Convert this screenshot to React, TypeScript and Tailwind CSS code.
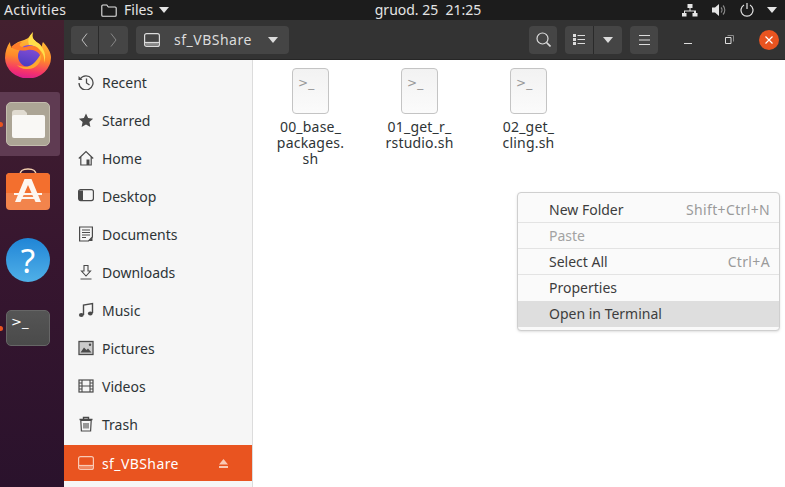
import React from 'react';

const font = "font-['Noto_Sans','Open_Sans',sans-serif]";

const Caret = ({ className = '' }: { className?: string }) => (
  <svg width="10" height="6" viewBox="0 0 10 6" className={className}>
    <path d="M0 0h10L5 6z" fill="currentColor" />
  </svg>
);

const DriveIcon = ({ color = '#dcdcdc' }: { color?: string }) => (
  <svg width="16" height="14" viewBox="0 0 16 14" fill="none" stroke={color} strokeWidth="1.2">
    <rect x="0.6" y="0.6" width="14.8" height="12.8" rx="2" />
    <path d="M1 9.500h14" />
    <path d="M1.500 10h13v2.500h-13z" fill={color} stroke="none" opacity="0.45" />
  </svg>
);

const sideIcons: Record<string, React.ReactNode> = {
  Recent: (
    <>
      <path d="M2.200 5A7 7 0 1 1 1 9" fill="none" stroke="#4a4a4a" strokeWidth="1.3" />
      <path d="M0.500 2v4h4z" fill="#4a4a4a" />
      <path d="M8.500 4.500V9l3 2" fill="none" stroke="#4a4a4a" strokeWidth="1.3" />
    </>
  ),
  Starred: <path d="M8 1.500l2.100 4.600 5 .6-3.700 3.400 1 5L8 12.600l-4.400 2.500 1-5L.9 6.700l5-.6z" fill="#4a4a4a" />,
  Home: (
    <>
      <path d="M0.800 8.500L8 1.500l7.200 7M2.800 7v8h10.400V7" fill="none" stroke="#4a4a4a" strokeWidth="1.2" />
      <path d="M8.500 9.500h3V15h-3z" fill="#4a4a4a" />
    </>
  ),
  Desktop: (
    <>
      <rect x="0.6" y="1.600" width="14.8" height="11" rx="2" fill="none" stroke="#4a4a4a" strokeWidth="1.2" />
      <path d="M1 2.500h4V12H1z" fill="#4a4a4a" />
    </>
  ),
  Documents: (
    <>
      <path d="M1.600 1h12.800v10L10.500 15H1.600z" fill="none" stroke="#4a4a4a" strokeWidth="1.2" />
      <path d="M4 4h8M4 6.500h8M4 9h8M4 11.500h4" stroke="#4a4a4a" strokeWidth="1" />
      <path d="M14.500 11v4H10.500z" fill="#4a4a4a" />
    </>
  ),
  Downloads: <path d="M6 1.500h4v5.500h2.500L8 12 3.500 7H6zM2.500 15h11" fill="none" stroke="#4a4a4a" strokeWidth="1.1" />,
  Music: (
    <>
      <path d="M5.500 13V3l9-1.500V11" fill="none" stroke="#4a4a4a" strokeWidth="1.4" />
      <ellipse cx="3.300" cy="13" rx="2.400" ry="1.900" fill="#4a4a4a" />
      <ellipse cx="12.300" cy="11.500" rx="2.400" ry="1.900" fill="#4a4a4a" />
    </>
  ),
  Pictures: (
    <>
      <rect x="1" y="1.500" width="14" height="13" fill="none" stroke="#4a4a4a" strokeWidth="1.3" />
      <path d="M1.500 2h13v12h-13z" fill="#4a4a4a" opacity="0.25" />
      <path d="M2.500 12.500l3.500-5 2.500 2.500 1.500-1.500 3.500 4z" fill="#4a4a4a" />
      <circle cx="12" cy="4.800" r="1.200" fill="#4a4a4a" />
    </>
  ),
  Videos: (
    <>
      <rect x="1" y="2" width="14" height="12" fill="none" stroke="#4a4a4a" strokeWidth="1.2" />
      <path d="M4 2v12M12 2v12M4 8h8M1 5h3M1 8h3M1 11h3M12 5h3M12 8h3M12 11h3" stroke="#4a4a4a" strokeWidth="1.1" />
    </>
  ),
  Trash: (
    <>
      <path d="M1.500 3.500h13M5.500 3.500V1.500h5v2" fill="none" stroke="#4a4a4a" strokeWidth="1.4" />
      <path d="M2.800 4.500h10.400l-.6 10.500H3.400z" fill="none" stroke="#4a4a4a" strokeWidth="1.2" />
      <path d="M6 7v5.500M8 7v5.500M10 7v5.500" stroke="#4a4a4a" strokeWidth="1.1" />
    </>
  ),
};

const places = ['Recent', 'Starred', 'Home', 'Desktop', 'Documents', 'Downloads', 'Music', 'Pictures', 'Videos', 'Trash'];

const files = [
  { lines: ['00_base_', 'packages.', 'sh'] },
  { lines: ['01_get_r_', 'rstudio.sh'] },
  { lines: ['02_get_', 'cling.sh'] },
];

const menu = [
  { label: 'New Folder', hint: 'Shift+Ctrl+N', line: true },
  { label: 'Paste', disabled: true, line: true },
  { label: 'Select All', hint: 'Ctrl+A', line: true },
  { label: 'Properties' },
  { label: 'Open in Terminal', active: true },
];

const FileIcon = () => (
  <div className="w-[37px] h-[46px] rounded-[4px] border border-[#c4c4c4] bg-gradient-to-b from-[#f2f2f2] to-[#fbfbfb] pl-[5px] text-[12px] leading-[28px] text-[#999] font-['DejaVu_Sans',sans-serif]">
    &gt;_
  </div>
);

const HeaderButton = ({ children, className = '' }: { children: React.ReactNode; className?: string }) => (
  <div className={`h-[28px] rounded-[4px] bg-[#454545] flex items-center justify-center ${className}`}>{children}</div>
);

const Dock = () => (
  <div className="w-[64px] shrink-0 h-full flex flex-col bg-gradient-to-b from-[#43202f] via-[#37162f] to-[#2a122c]">
    <div className="h-[72px] pt-[12px] pl-[5px]">
      <svg width="46" height="46" viewBox="0 0 46 46">
        <defs>
          <linearGradient id="fx" x1="0.6" y1="0" x2="0.45" y2="1">
            <stop offset="0" stopColor="#ffcf3a" />
            <stop offset="0.55" stopColor="#ff8a2a" />
            <stop offset="0.85" stopColor="#f5336b" />
            <stop offset="1" stopColor="#d91f8c" />
          </linearGradient>
          <linearGradient id="fxball" x1="0.6" y1="0" x2="0.4" y2="1">
            <stop offset="0" stopColor="#8a4fd8" />
            <stop offset="1" stopColor="#4a3cc0" />
          </linearGradient>
        </defs>
        <path d="M28 0c-2 6 1 8 5 11 2 1 3 2 4 4 0-2 0-3 1-5 5 5 8 11 8 15a23 21 0 0 1-46 1C0 20 2 14 5 10c0 3 1 5 2 6 2-4 5-6 9-7 4-1 9-3 12-9z" fill="url(#fx)" />
        <path d="M28 0c-2 6 1 8 5 11 6 5 9 12 6 20 2-10-6-17-15-18-2-6 1-10 4-13z" fill="#ffdf4a" />
        <circle cx="24" cy="24" r="11" fill="url(#fxball)" />
        <path d="M6 15c4-4 9-5 11-5-2 1-3 3-2 4 3 2 6 1 9 0 8-1 13 4 12 11-2-5-7-8-13-7-5 1-12 1-17-3z" fill="#ff7c2a" />
        <path d="M36 22c1 9-6 16-15 15-4 0-7-2-9-4 7 3 14 2 18-3 3-3 4-6 6-8z" fill="#ffa92e" />
      </svg>
    </div>
    <div className="w-[60px] h-[64px] rounded-r-[3px] bg-[#5f3b52] pt-[10px] pl-[6px] relative">
      <div className="absolute left-0 top-[30px] w-[3px] h-[5px] rounded-r-full bg-[#e95420]" />
      <div className="w-[44px] h-[44px] rounded-[5px] bg-[#aca595] border border-[#c4bdae] pt-[7px] pl-[5px]">
        <svg width="33" height="28" viewBox="0 0 33 28">
          <path d="M0 3a3 3 0 0 1 3-3h9l3 3v4H0z" fill="#e0dbd0" />
          <path d="M0 7a2 2 0 0 1 2-2h29a2 2 0 0 1 2 2v19a2 2 0 0 1-2 2H2a2 2 0 0 1-2-2z" fill="#f9f8f5" />
        </svg>
      </div>
    </div>
    <div className="pl-[6px] pt-[12px] h-[82px]">
      <svg width="44" height="44" viewBox="0 0 44 44">
        <path d="M14 7c0-5 3-6 8-6s8 1 8 6" fill="none" stroke="#f6d2b0" strokeWidth="1.5" />
        <rect x="0" y="5" width="44" height="37" rx="4" fill="#f2844c" />
        <path d="M0 9a4 4 0 0 1 4-4h36a4 4 0 0 1 4 4v16H0z" fill="#f36f2e" />
        <path d="M18.500 11h7L35 34h-5.500L22 17 14.500 34H9z" fill="#fdf6f0" />
        <path d="M8 25h28v2H8zM12 29h20v2H12z" fill="#fdf6f0" />
      </svg>
    </div>
    <div className="pl-[6px] h-[72px]">
      <div className={`w-[44px] h-[44px] rounded-full bg-gradient-to-b from-[#1f85d6] to-[#4fb0e8] flex items-center justify-center text-white text-[33px] leading-none ${font}`}>
        ?
      </div>
    </div>
    <div className="pl-[6px] relative">
      <div className="absolute left-0 top-[16px] w-[3px] h-[5px] rounded-r-full bg-[#e95420]" />
      <div className="w-[44px] h-[36px] rounded-[5px] bg-gradient-to-b from-[#555555] to-[#4a4a4a] border border-[#666666] pl-[4px] text-white text-[13px] leading-[22px] font-['DejaVu_Sans',sans-serif]">
        &gt;_
      </div>
    </div>
  </div>
);

const TopBar = () => (
  <div className={`h-[20px] shrink-0 bg-[#1c1c1c] text-[#e4e4e4] text-[14px] leading-[14px] flex items-center ${font}`}>
    <div className="w-[101px] pl-[4px] tracking-[0.4px]">Activities</div>
    <svg width="16" height="13" viewBox="0 0 16 13" fill="none" stroke="#e4e4e4" strokeWidth="1.1">
      <path d="M.8 2a1 1 0 0 1 1-1h4l1.500 2h6.900a1 1 0 0 1 1 1v7.200a1 1 0 0 1-1 1H1.800a1 1 0 0 1-1-1z" />
    </svg>
    <span className="ml-[7px]">Files</span>
    <Caret className="ml-[6px]" />
    <div className="flex-1 text-center pr-[5px] pl-[10px]">gruod. 25&nbsp;&nbsp;21:25</div>
    <svg width="16" height="13" viewBox="0 0 16 13" fill="#e4e4e4">
      <path d="M5.500 0h5v4h-2v2.500h5.500V9h1.500v3.500h-5V9h1.500V7.500H3V9h1.500v3.500h-5V9H2V6.500h5.500V4h-2z" />
    </svg>
    <svg width="16" height="14" viewBox="0 0 16 14" className="ml-[13px]" fill="#e4e4e4">
      <path d="M1 4.500h3L8 1v12L4 9.500H1z" />
      <path d="M10 4.500a3.500 3.500 0 0 1 0 5M12 2.500a6.500 6.500 0 0 1 0 9" fill="none" stroke="#8a8a8a" strokeWidth="1.1" />
    </svg>
    <svg width="14" height="14" viewBox="0 0 14 14" className="ml-[13px]" fill="none" stroke="#e4e4e4" strokeWidth="1.2">
      <path d="M4 2a6 6 0 1 0 6 0M7 0v6" />
    </svg>
    <Caret className="ml-[13px] mr-[8px]" />
  </div>
);

const Header = () => (
  <div className="h-[40px] shrink-0 bg-[#333333] flex items-center pl-[7px] pr-[6px] border-b border-[#262626]">
    <div className="w-[57px] h-[28px] rounded-[4px] bg-[#454545] flex">
      <div className="w-[28px] flex items-center justify-center border-r border-[#2a2a2a]">
        <svg width="7" height="14" viewBox="0 0 7 14" fill="none" stroke="#bdbdbd">
          <path d="M6 .5L1 7l5 6.500" />
        </svg>
      </div>
      <div className="flex-1 flex items-center justify-center">
        <svg width="7" height="14" viewBox="0 0 7 14" fill="none" stroke="#888">
          <path d="M1 .5L6 7l-5 6.500" />
        </svg>
      </div>
    </div>
    <HeaderButton className={`w-[153px] ml-[8px] !justify-start pl-[8px] text-[#dcdcdc] text-[14px] ${font}`}>
      <DriveIcon />
      <span className="ml-[14px] tracking-[0.5px]">sf_VBShare</span>
      <Caret className="ml-[16px]" />
    </HeaderButton>
    <div className="flex-1" />
    <HeaderButton className="w-[28px]">
      <svg width="15" height="15" viewBox="0 0 15 15" fill="none" stroke="#dcdcdc" strokeWidth="1.2">
        <circle cx="6.500" cy="6.500" r="5.500" />
        <path d="M10.500 10.500l4 4" strokeWidth="1.6" />
      </svg>
    </HeaderButton>
    <div className="w-[57px] h-[28px] rounded-[4px] bg-[#454545] flex ml-[8px]">
      <div className="w-[29px] flex items-center justify-center border-r border-[#2a2a2a]">
        <svg width="12" height="11" viewBox="0 0 12 11" fill="#dcdcdc">
          <path d="M0 0h3v3H0zM4.500 1h7.500v1H4.500zM0 4h3v3H0zM4.500 5h7.500v1H4.500zM0 8h3v3H0zM4.500 9h7.500v1H4.500z" />
        </svg>
      </div>
      <div className="flex-1 flex items-center justify-center text-[#dcdcdc]">
        <Caret />
      </div>
    </div>
    <HeaderButton className="w-[28px] ml-[8px]">
      <svg width="11" height="10" viewBox="0 0 11 10" fill="#dcdcdc">
        <path d="M0 0h11v1H0zM0 4.500h11v1H0zM0 9h11v1H0z" />
      </svg>
    </HeaderButton>
    <div className="w-[60px] h-full flex items-center justify-center">
      <div className="w-[8px] h-[1px] bg-[#dcdcdc] mt-[8px]" />
    </div>
    <div className="w-[22px] flex justify-center">
      <svg width="9" height="9" viewBox="0 0 9 9" fill="none" stroke="#dcdcdc">
        <path d="M.5 2.500h5.500v6H.5z" />
        <path d="M2.500 .5h6v6" stroke="#8a8a8a" />
      </svg>
    </div>
    <div className="w-[20px] h-[20px] ml-[19px] rounded-full bg-[#e95420] flex items-center justify-center">
      <svg width="8" height="8" viewBox="0 0 8 8" stroke="#fff" strokeWidth="1.2">
        <path d="M.5 .5l7 7M7.500 .5l-7 7" />
      </svg>
    </div>
  </div>
);

const Sidebar = () => (
  <div className={`w-[189px] shrink-0 h-full bg-[#f6f6f6] border-r border-[#dcdcdc] pt-[3px] text-[#2e3436] text-[14px] ${font}`}>
    {places.map((name) => (
      <div key={name} className="h-[38px] flex items-center pl-[14px]">
        <svg width="16" height="16" viewBox="0 0 16 16">
          {sideIcons[name]}
        </svg>
        <span className="ml-[8px]">{name}</span>
      </div>
    ))}
    <div className="h-[36px] mt-[2px] bg-[#e95420] flex items-center pl-[14px] text-white">
      <DriveIcon color="#f9c9b5" />
      <span className="ml-[8px] tracking-[0.4px]">sf_VBShare</span>
      <svg width="9" height="9" viewBox="0 0 9 9" className="ml-[40px]" fill="#f9c9b5">
        <path d="M4.500 0L9 5.500H0zM0 7h9v2H0z" />
      </svg>
    </div>
  </div>
);

const ContextMenu = () => (
  <div className={`absolute left-[517px] top-[192px] w-[263px] h-[139px] rounded-[4px] border border-[#cfcfcf] bg-[#fafafa] shadow-sm pt-[4px] text-[14px] text-[#3d3d3d] ${font}`}>
    {menu.map((item) => (
      <div
        key={item.label}
        className={`h-[26px] flex items-center justify-between pl-[31px] pr-[9px] border-b ${item.line ? 'border-[#e3e3e3]' : 'border-transparent'} ${item.active ? 'bg-[#dedede]' : ''} ${item.disabled ? 'text-[#a3a3a3]' : ''}`}
      >
        <span>{item.label}</span>
        {item.hint && <span className="text-[#9a9a9a] tracking-[0.35px]">{item.hint}</span>}
      </div>
    ))}
  </div>
);

const App: React.FC = () => (
  <div className="relative w-[785px] h-[487px] overflow-hidden flex flex-col">
    <TopBar />
    <div className="flex-1 flex min-h-0">
      <Dock />
      <div className="flex-1 flex flex-col min-w-0">
        <Header />
        <div className="flex-1 flex min-h-0">
          <Sidebar />
          <div className={`flex-1 bg-white flex items-start pl-[3px] pt-[8px] text-[14px] leading-[16px] tracking-[0.2px] text-[#2e3436] ${font}`}>
            {files.map((f) => (
              <div key={f.lines[0]} className="w-[109px] flex flex-col items-center">
                <FileIcon />
                <div className="mt-[5px] text-center">
                  {f.lines.map((l) => (
                    <div key={l}>{l}</div>
                  ))}
                </div>
              </div>
            ))}
          </div>
        </div>
      </div>
    </div>
    <ContextMenu />
  </div>
);

export default App;
